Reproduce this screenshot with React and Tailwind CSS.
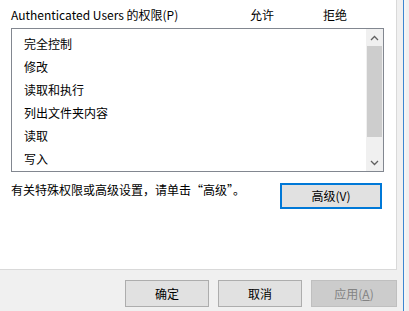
const FONT = 'font-["Microsoft_YaHei_UI","Noto_Sans_CJK_SC",sans-serif]'

const rows = ['完全控制', '修改', '读取和执行', '列出文件夹内容', '读取', '写入']

function Chevron({ up }) {
  return (
    <svg width="9" height="6" viewBox="0 0 9 6">
      <polyline
        points={up ? '1,5 4.5,1.5 8,5' : '1,1 4.5,4.5 8,1'}
        fill="none"
        stroke="#606060"
        strokeWidth="1.3"
      />
    </svg>
  )
}

export default function App() {
  return (
    <div className={`w-[409px] h-[311px] bg-[#f0f0f0] flex overflow-hidden text-[12px] leading-[16px] text-black ${FONT}`}>
      <div className="w-[397px] flex flex-col">
        {/* permissions panel */}
        <div className="h-[270px] bg-white border-r border-b border-[#d9d9d9] pl-[11px] pr-[12px] pt-[7px]">
          <div className="flex items-center h-[16px]">
            <span className="w-[239px]">Authenticated Users 的权限(P)</span>
            <span className="w-[73px]">允许</span>
            <span>拒绝</span>
          </div>

          <div className="mt-[5px] h-[144px] border border-[#828790] flex">
            <div className="flex-1 pt-[3px] pl-[12px]">
              {rows.map((r) => (
                <div key={r} className="h-[23px] flex items-center">{r}</div>
              ))}
            </div>
            <div className="w-[17px] bg-[#f0f0f0] flex flex-col">
              <div className="h-[17px] flex items-center justify-center"><Chevron up /></div>
              <div className="h-[91px] mx-[1px] bg-[#cdcdcd]" />
              <div className="flex-1" />
              <div className="h-[17px] flex items-center justify-center"><Chevron /></div>
            </div>
          </div>

          <div className="flex items-start mt-[10px]">
            <span className="w-[269px]">有关特殊权限或高级设置，请单击“高级”。</span>
            <button className="w-[102px] h-[26px] mt-[1px] bg-[#e1e1e1] border-2 border-[#0078d7] flex items-center justify-center">
              高级(V)
            </button>
          </div>
        </div>

        {/* dialog buttons */}
        <div className="flex gap-[9px] pl-[125px] pt-[10px]">
          <button className="w-[86px] h-[27px] bg-[#e1e1e1] border border-[#adadad] flex items-center justify-center">确定</button>
          <button className="w-[86px] h-[27px] bg-[#e1e1e1] border border-[#adadad] flex items-center justify-center">取消</button>
          <button className="w-[86px] h-[27px] shrink-0 bg-[#cccccc] border border-[#bfbfbf] text-[#838383] flex items-center justify-center">
            应用(<span className="underline">A</span>)
          </button>
        </div>
      </div>

      {/* window edge */}
      <div className="w-[9px] flex">
        <div className="w-[9px] bg-[#f0f0f0]" />
      </div>
      <div className="w-[1px] bg-[#3c86d1] -ml-[3px]" />
      <div className="w-[2px] bg-[#f4f4f4]" />
    </div>
  )
}
